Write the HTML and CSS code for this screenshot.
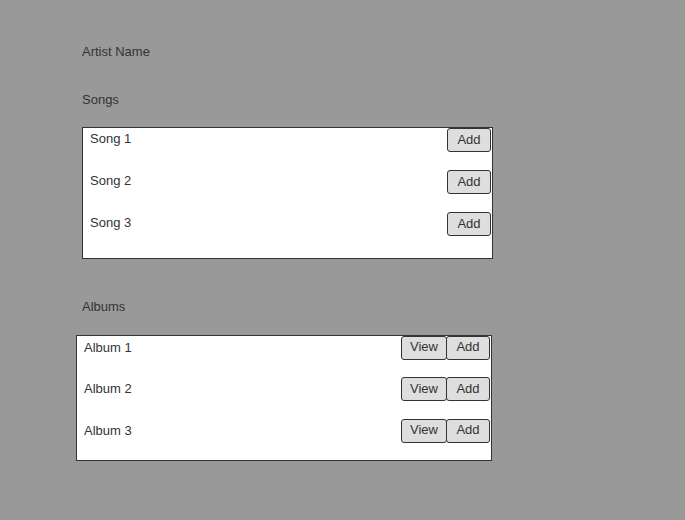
FILE: index.html
```html
<!DOCTYPE html>
<html>
<head>
<meta charset="utf-8">
<link rel="stylesheet" href="styles.css">
</head>
<body>
<div class="page">
  <div class="title">Artist Name</div>
  <div class="label songs-label">Songs</div>
  <div class="list songs">
    <div class="row"><span class="name">Song 1</span><div class="btns"><button class="btn add">Add</button></div></div>
    <div class="row"><span class="name">Song 2</span><div class="btns"><button class="btn add">Add</button></div></div>
    <div class="row"><span class="name">Song 3</span><div class="btns"><button class="btn add">Add</button></div></div>
  </div>
  <div class="label albums-label">Albums</div>
  <div class="list albums">
    <div class="row"><span class="name">Album 1</span><div class="btns"><button class="btn view">View</button><button class="btn add">Add</button></div></div>
    <div class="row"><span class="name">Album 2</span><div class="btns"><button class="btn view">View</button><button class="btn add">Add</button></div></div>
    <div class="row"><span class="name">Album 3</span><div class="btns"><button class="btn view">View</button><button class="btn add">Add</button></div></div>
  </div>
</div>
</body>
</html>
```
FILE: styles.css
```css
html, body {
  margin: 0;
  padding: 0;
  background: #999999;
  width: 685px;
  height: 520px;
  overflow: hidden;
}
.page {
  font-family: "Liberation Sans", Arial, sans-serif;
  font-size: 13px;
  line-height: 16px;
  color: #333333;
  padding-top: 44px;
}
.title {
  margin-left: 82px;
}
.label {
  margin-left: 82px;
}
.songs-label {
  margin-top: 32px;
}
.list {
  background: #ffffff;
  border: 1px solid #333333;
  box-sizing: border-box;
  display: flex;
  flex-direction: column;
}
.songs {
  margin-left: 82px;
  margin-top: 19px;
  width: 411px;
  height: 132px;
  padding: 0 1px 0 7px;
  gap: 18px;
}
.songs .name {
  margin-top: -2px;
}
.albums-label {
  margin-top: 40px;
}
.albums {
  margin-left: 76px;
  margin-top: 20px;
  width: 416px;
  height: 126px;
  padding: 0 1px 0 7px;
  gap: 18px;
}
.row {
  display: flex;
  align-items: center;
  justify-content: space-between;
  height: 24px;
}
.albums .row {
  height: 23.5px;
}
.btns {
  display: flex;
}
.btn {
  font-family: "Liberation Sans", Arial, sans-serif;
  font-size: 13px;
  color: #333333;
  background: #dedede;
  border: 1px solid #333333;
  border-radius: 3px;
  height: 24px;
  padding: 0 0 2px 0;
  margin: 0;
  box-sizing: border-box;
}
.add {
  width: 44px;
}
.view {
  width: 46px;
  margin-right: -1px;
}
```
